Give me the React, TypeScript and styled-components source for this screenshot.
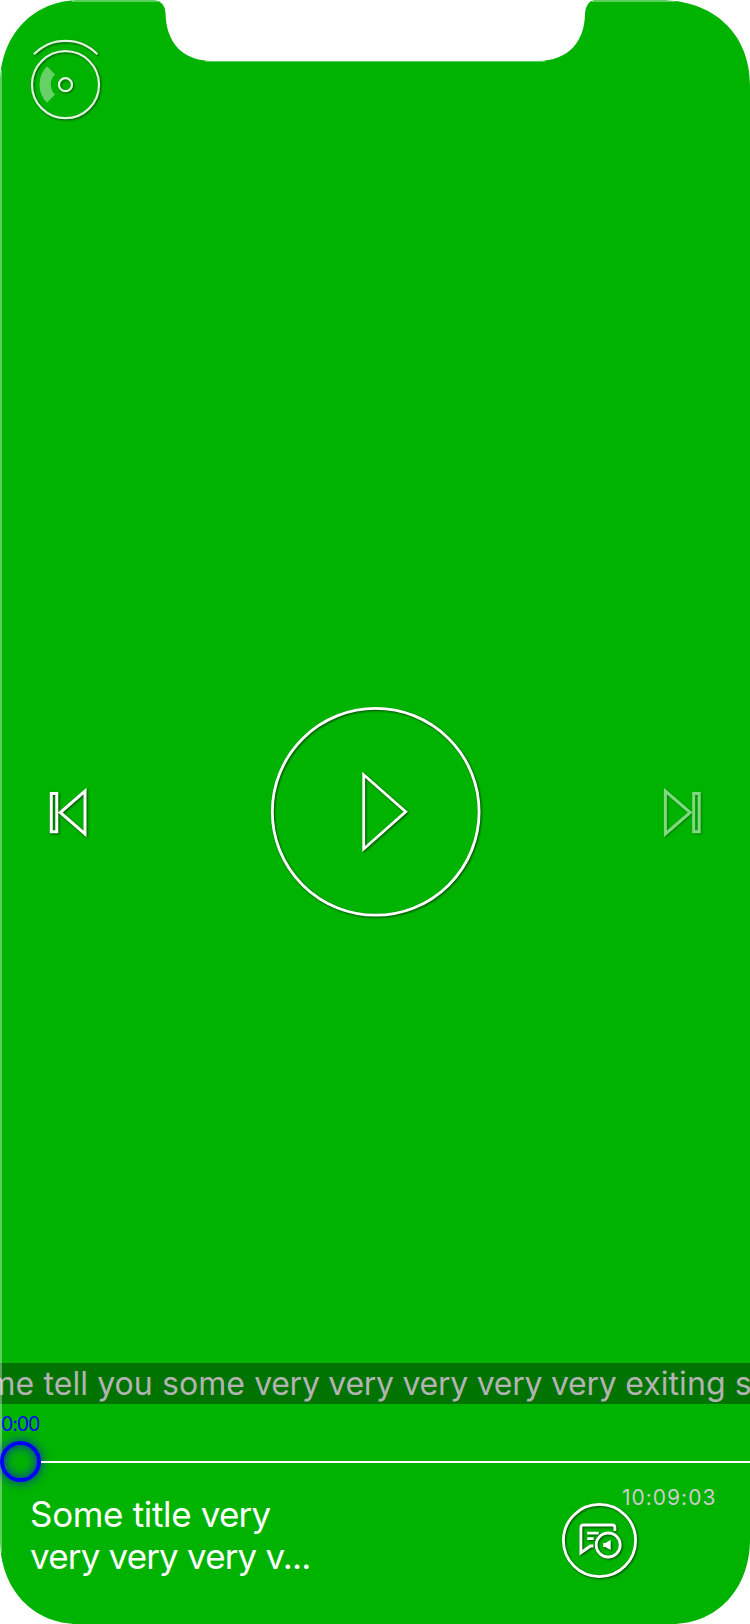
import React from "react";
import styled, { createGlobalStyle } from "styled-components";

const GlobalStyle = createGlobalStyle`
  * { box-sizing: border-box; }
  body { margin: 0; background: #fff; font-family: Inter, "Liberation Sans", sans-serif; }
`;

const Screen = styled.main`
  position: relative;
  width: 750px;
  height: 1624px;
  overflow: hidden;
  display: flex;
  flex-direction: column;
  background: #00b300;
`;

const Frame = styled.svg`
  position: absolute;
  inset: 0;
  pointer-events: none;
`;

const Icon = styled.svg<{ $dim?: number; $stroke?: number }>`
  display: block;
  flex: none;
  overflow: visible;
  fill: none;
  stroke: #fff;
  stroke-width: ${(p) => p.$stroke ?? 2.8};
  opacity: ${(p) => p.$dim ?? 1};
`;

const Shaded = styled.g`
  filter: drop-shadow(1.5px 1.5px 1px rgba(0, 0, 0, 0.6));
`;

const IconButton = styled.button`
  display: block;
  padding: 0;
  border: 0;
  background: none;
`;

const TopBar = styled.header`
  height: 160px;
  padding: 38px 0 0 29px;
`;

const Controls = styled.div`
  height: 1203px;
  padding: 547px 49px 0;
  display: flex;
  justify-content: space-between;
  align-items: flex-start;
`;

const SideControl = styled(IconButton)`
  margin-top: 80px;
`;

const Subtitles = styled.div`
  height: 41px;
  display: flex;
  overflow: hidden;
  background: #007300;
  color: #b3b3b3;
  font-size: 32px;
  line-height: 41px;
  white-space: nowrap;
`;

const SubtitleText = styled.span`
  margin-left: -12.5px;
  flex: none;
`;

const Word = styled.span<{ $spacing: number }>`
  letter-spacing: ${(p) => p.$spacing}px;
`;

const Progress = styled.div`
  position: relative;
  height: 82px;
  padding-top: 8px;
`;

const Elapsed = styled.div`
  height: 29px;
  padding-left: 1px;
  color: #0000ff;
  font-size: 19.5px;
  line-height: 24px;
  letter-spacing: -1.1px;
`;

const Track = styled.div`
  height: 41px;
  display: flex;
  align-items: center;
`;

const Knob = styled.div`
  width: 41px;
  height: 41px;
  flex: none;
  border: 4px solid #0000ff;
  border-radius: 50%;
  box-shadow: 0 0 11px rgba(0, 0, 255, 0.75), inset 0 0 11px rgba(0, 0, 255, 0.75);
`;

const Line = styled.div`
  flex: 1;
  height: 2px;
  background: #fff;
`;

const Footer = styled.footer`
  position: relative;
  flex: 1;
  display: flex;
  padding-left: 30px;
`;

const Title = styled.h1`
  width: 532px;
  margin: 7px 0 0;
  color: #fff;
  font-size: 35px;
  font-weight: 400;
  line-height: 42px;
`;

const CaptionButton = styled(IconButton)`
  margin-top: 17px;
  height: 75px;
`;

const Duration = styled.div`
  margin: 0 0 0 -15px;
  color: #ccc;
  font-size: 21px;
  line-height: 24px;
  letter-spacing: 1px;
`;

/* The repeated "very" is set tighter than the words around it. */
function Spaced({ text, base, tight }: { text: string; base: number; tight: number }) {
  return (
    <>
      {text.split(/(?<= )/).map((word, i) => (
        <Word key={i} $spacing={word.startsWith("v") ? tight : base}>
          {word}
        </Word>
      ))}
    </>
  );
}

export default function App() {
  return (
    <>
      <GlobalStyle />
      <Screen>
        <Frame width="750" height="1624" viewBox="0 0 750 1624">
          <path fill="#fff" fillOpacity=".36" d="M0 70H2V1553H0ZM72 0H158V2H72ZM592 0H675V2H592ZM205 60H545V62H205Z" />
          <path fill="#fff" d="M0 0H80C34 0 0 34 0 85ZM750 0H660C714 0 750 34 750 85ZM155 0Q165 2 165.500 13C166 40 180 61 213 61H537C570 61 585 40 585 13Q586 2 594 0ZM0 1539C0 1590 34 1624 78 1624H0ZM750 1539C750 1590 716 1624 672 1624H750Z" />
        </Frame>
        <TopBar>
          <Icon width="74" height="82" viewBox="29 38 74 82" $dim={0.88} $stroke={2.2}>
            <path d="M47 66.200A26 26 0 0 0 47 102.800L55 94.500A14 14 0 0 1 55 74.500Z" fill="#fff" fillOpacity=".46" stroke="none" />
            <Shaded>
              <circle cx="65.500" cy="84.700" r="33.500" />
              <circle cx="65.500" cy="84.700" r="6.500" />
              <path d="M34 54.300a44 44 0 0 1 63.400 0" />
            </Shaded>
          </Icon>
        </TopBar>
        <Controls>
          <SideControl aria-label="Previous">
            <Icon width="40" height="50" viewBox="49 787 40 50" $stroke={3}>
              <Shaded>
                <path d="M51.300 793.400h5.500v38.300h-5.500zM85 791v43L60.300 812.500z" />
              </Shaded>
            </Icon>
          </SideControl>
          <IconButton aria-label="Play">
            <Icon width="210" height="210" viewBox="270 707 210 210">
              <Shaded>
                <circle cx="375.700" cy="811.800" r="103.400" />
                <path d="M363.700 774.800v74.200l42-37.200z" />
              </Shaded>
            </Icon>
          </IconButton>
          <SideControl aria-label="Next">
            <Icon width="40" height="50" viewBox="661 787 40 50" $dim={0.5} $stroke={3}>
              <Shaded>
                <path d="M699.200 793.400h-5.500v38.300h5.500zM665.400 791v43l24.800-21.500z" />
              </Shaded>
            </Icon>
          </SideControl>
        </Controls>
        <Subtitles>
          <SubtitleText>
            <Spaced text="me tell you some very very very very very exiting s" base={0.08} tight={-0.27} />
          </SubtitleText>
        </Subtitles>
        <Progress>
          <Elapsed>0:00</Elapsed>
          <Track>
            <Knob />
            <Line />
          </Track>
        </Progress>
        <Footer>
          <Title>
            <Spaced text="Some title very" base={-0.33} tight={-0.83} />
            <br />
            <Spaced text="very very very v..." base={-0.33} tight={-0.83} />
          </Title>
          <CaptionButton aria-label="Captions">
            <Icon width="75" height="75" viewBox="561.800 1503 75 75">
              <Shaded>
                <circle cx="599.300" cy="1540.500" r="36.100" />
                <circle cx="608" cy="1545" r="12" />
                <path d="M614.700 1531v-3.500q0-2.500-2.500-2.500h-29q-2.500 0-2.500 2.500v25.200l9.500-6.700h3M587 1533.200h11.500M587 1538.600h6.500" />
                <path d="M603 1543h2l5.500-3v10l-5.500-3h-2z" fill="#fff" stroke="none" />
              </Shaded>
            </Icon>
          </CaptionButton>
          <Duration>10:09:03</Duration>
        </Footer>
      </Screen>
    </>
  );
}
